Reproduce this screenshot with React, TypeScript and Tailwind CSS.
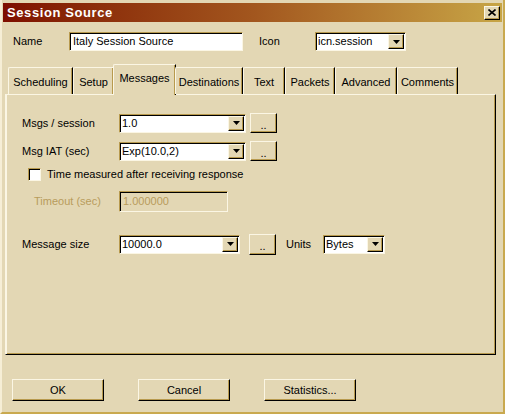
import React from "react";

const font = "font-['Liberation_Sans',Arial,sans-serif]";

// sunken edit field edges
const sunken =
  "border border-t-[#b89a4e] border-l-[#b89a4e] border-b-[#fbf6e4] border-r-[#fbf6e4] shadow-[inset_1px_1px_0_#000]";
// raised button edges
const raised =
  "border border-t-[#fbf6e4] border-l-[#fbf6e4] border-b-black border-r-black shadow-[inset_-1px_-1px_0_#b89a4e] bg-[#e3d7b4]";

function Arrow() {
  return (
    <div className={`${raised} w-[16px] h-[15px] flex items-center justify-center`}>
      <svg width="7" height="4" viewBox="0 0 7 4">
        <path d="M0 0h7L3.5 4z" fill="#000" />
      </svg>
    </div>
  );
}

function Combo({ value, w }: { value: string; w: string }) {
  return (
    <div className={`${sunken} ${w} h-[19px] bg-white flex items-center pl-[2px] pr-[1px]`}>
      <span className="flex-1 text-[11px] leading-none truncate">{value}</span>
      <Arrow />
    </div>
  );
}

function Dots({ h = "h-[20px]" }: { h?: string }) {
  return (
    <button className={`${raised} w-[27px] ${h} text-[11px] leading-none pt-[4px]`}>..</button>
  );
}

function Btn({ label }: { label: string }) {
  return (
    <button className={`${raised} w-[92px] h-[22px] text-[11px] leading-none`}>{label}</button>
  );
}

const tabs = [
  { name: "Scheduling", w: "w-[65px]" },
  { name: "Setup", w: "w-[41px]" },
  { name: "Messages", w: "w-[63px]", active: true },
  { name: "Destinations", w: "w-[68px]" },
  { name: "Text", w: "w-[42px]" },
  { name: "Packets", w: "w-[50px]" },
  { name: "Advanced", w: "w-[62px]" },
  { name: "Comments", w: "w-[61px]" },
];

export default function App() {
  return (
    <div
      className={`${font} w-[505px] h-[414px] bg-[#e3d7b4] text-black flex flex-col border-l-2 border-l-[#f6eed6] border-r-2 border-r-[#c9a94f] border-b-2 border-b-[#c9a94f] overflow-hidden`}
    >
      {/* title bar */}
      <div className="mt-[3px] ml-px mr-px h-[19px] bg-gradient-to-r from-[#7e0d00] via-[#a2561e] to-[#c7a546] flex items-center pl-[4px] pr-[2px]">
        <span className="flex-1 text-white font-bold text-[13px] tracking-[0.6px]">Session Source</span>
        <div className={`${raised} w-[16px] h-[14px] flex items-center justify-center`}>
          <svg width="8" height="7" viewBox="0 0 8 7">
            <path d="M0.5 0.5l7 6M7.5 0.5l-7 6" stroke="#000" strokeWidth="1.6" />
          </svg>
        </div>
      </div>

      {/* name row */}
      <div className="flex items-center h-[19px] mt-[10px] text-[11px]">
        <span className="w-[67px] pl-[11px]">Name</span>
        <div className={`${sunken} w-[174px] h-[19px] bg-white flex items-center pl-[3px]`}>
          Italy Session Source
        </div>
        <span className="w-[72px] pl-[16px]">Icon</span>
        <Combo value="icn.session" w="w-[91px]" />
      </div>

      {/* tabs */}
      <div className="flex items-end mt-[12px] pl-[6px] h-[31px] text-[11px] relative z-10">
        {tabs.map((t) =>
          t.active ? (
            <div
              key={t.name}
              className={`${t.w} h-[31px] -mb-px bg-[#e3d7b4] border-t border-l border-[#fbf6e4] rounded-tl-[2px] border-r border-r-black shadow-[inset_-1px_0_0_#b89a4e] flex justify-center pt-[5px] -mx-px`}
            >
              {t.name}
            </div>
          ) : (
            <div
              key={t.name}
              className={`${t.w} h-[27px] border-t border-l border-[#fbf6e4] rounded-tl-[2px] border-r border-r-black shadow-[inset_-1px_0_0_#b89a4e] flex justify-center pt-[6px]`}
            >
              {t.name}
            </div>
          )
        )}
      </div>

      {/* panel */}
      <div className="ml-[3px] w-[491px] h-[261px] border-t border-l border-t-[#fbf6e4] border-l-[#fbf6e4] border-r border-b border-r-black border-b-black shadow-[inset_1px_0_0_#fbf6e4,inset_-1px_-1px_0_#b89a4e] text-[11px] pl-[16px] pt-[18px] flex flex-col">
        <div className="flex items-center gap-[4px]">
          <span className="w-[93px]">Msgs / session</span>
          <Combo value="1.0" w="w-[127px]" />
          <Dots />
        </div>
        <div className="flex items-center gap-[4px] mt-[8px]">
          <span className="w-[93px]">Msg IAT (sec)</span>
          <Combo value="Exp(10.0,2)" w="w-[127px]" />
          <Dots />
        </div>
        <label className="flex items-center mt-[5px] ml-[6px] gap-[6px]">
          <span className={`${sunken} w-[13px] h-[13px] bg-white`} />
          <span>Time measured after receiving response</span>
        </label>
        <div className="flex items-center mt-[8px]">
          <span className="w-[97px] pl-[12px] text-[#b89c5c]">Timeout (sec)</span>
          <div className={`${sunken} w-[109px] h-[21px] flex items-center pl-[3px] text-[#b89c5c]`}>
            1.000000
          </div>
        </div>
        <div className="flex items-center mt-[22px]">
          <span className="w-[97px]">Message size</span>
          <Combo value="10000.0" w="w-[121px]" />
          <div className="ml-[9px]">
            <Dots h="h-[21px]" />
          </div>
          <span className="ml-[10px] w-[37px]">Units</span>
          <Combo value="Bytes" w="w-[62px]" />
        </div>
      </div>

      {/* buttons */}
      <div className="flex gap-[34px] pl-[10px] mt-[24px]">
        <Btn label="OK" />
        <Btn label="Cancel" />
        <Btn label="Statistics..." />
      </div>
    </div>
  );
}
